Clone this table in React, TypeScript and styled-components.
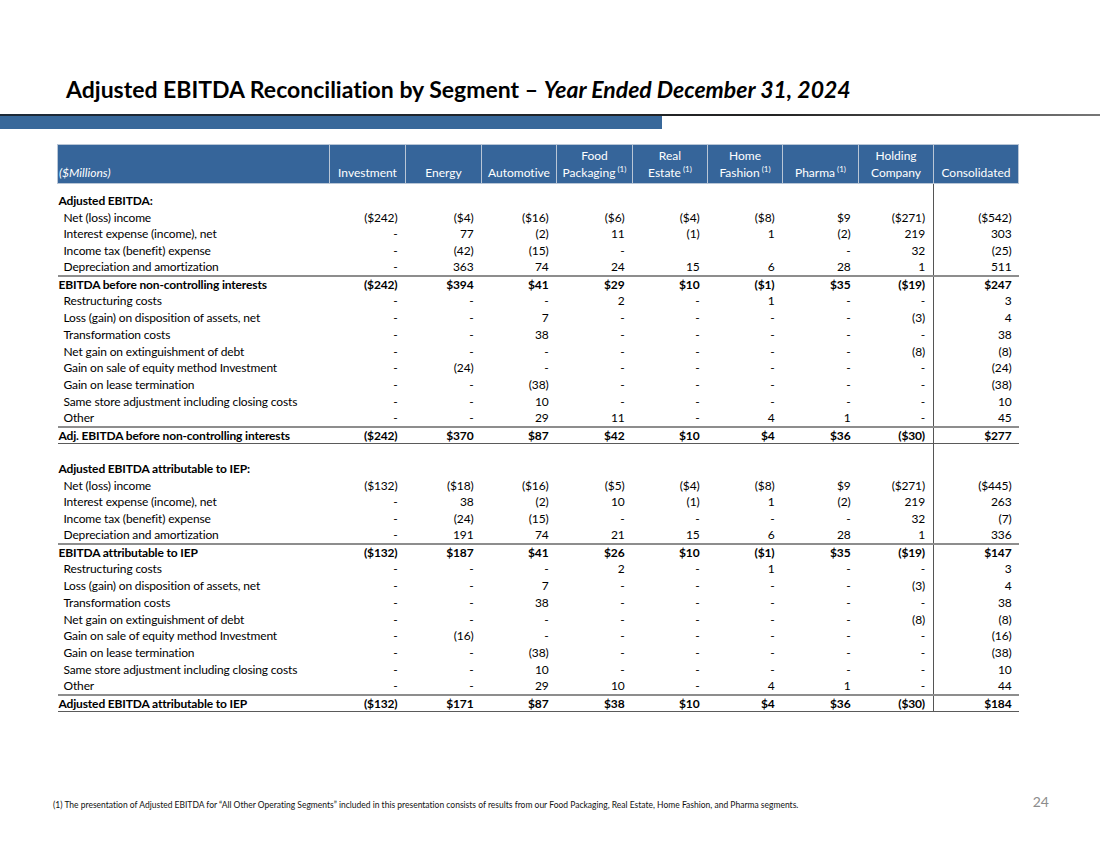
import styled, { createGlobalStyle } from 'styled-components';

const GlobalStyle = createGlobalStyle`
    html, body {
        margin: 0;
        padding: 0;
        background: #ffffff;
    }
    body {
        font-family: Lato, "Open Sans", "Liberation Sans", sans-serif;
        font-variant-ligatures: none;
        color: #000;
    }
`;

const Slide = styled.main`
    width: 1100px;
    height: 850px;
    box-sizing: border-box;
    background: #fff;
    display: flex;
    flex-direction: column;
    overflow: hidden;
`;

const Title = styled.h1`
    margin: 75px 0 0 66px;
    font-size: 23px;
    line-height: 29px;
    font-weight: 700;
    color: #000;

    em {
        font-style: italic;
    }
`;

const RuleBand = styled.div`
    margin-top: 10px;
    height: 1.5px;
    background: linear-gradient(to right, #1d2a38 0%, #222 70%, #777 100%);
`;

const BlueBar = styled.div`
    width: 662px;
    height: 13px;
    background: #38689a;
`;

const TableWrap = styled.div`
    margin: 15px 0 0 57px;
`;

const Table = styled.table`
    border-collapse: collapse;
    table-layout: fixed;
    width: 961px;
    font-size: 12px;
    letter-spacing: -0.15px;
`;

const HeadCell = styled.th<{ $left?: boolean }>`
    background: #36659a;
    color: #fff;
    font-weight: 400;
    font-style: ${({ $left }) => ($left ? 'italic' : 'normal')};
    text-align: ${({ $left }) => ($left ? 'left' : 'center')};
    vertical-align: bottom;
    padding: 0 2px 2px ${({ $left }) => ($left ? '1px' : '2px')};
    height: 36px;
    line-height: 17px;
    border: 1px solid #b9c6d6;
    white-space: nowrap;
    letter-spacing: 0;

    sup {
        font-size: 8px;
        vertical-align: 5px;
        line-height: 0;
    }
`;

const Spacer = styled.tr`
    height: 9px;
`;

const Row = styled.tr<{ $total?: boolean; $final?: boolean }>`
    height: 16.75px;
    font-weight: ${({ $total }) => ($total ? 700 : 400)};

    td {
        border-top: ${({ $total }) => ($total ? '2px solid #8d8d8d' : 'none')};
        border-bottom: ${({ $final }) => ($final ? '1px solid #5a5a5a' : 'none')};
    }
`;

const Label = styled.td<{ $indent?: boolean; $bold?: boolean }>`
    padding: 0 0 0 ${({ $indent }) => ($indent ? '6px' : '1px')};
    white-space: nowrap;
    line-height: 15px;
    font-weight: ${({ $bold }) => ($bold ? 700 : 'inherit')};
`;

const Num = styled.td<{ $divider?: boolean }>`
    text-align: right;
    padding: 0 ${({ $divider }) => ($divider ? '7px' : '8px')} 0 0;
    white-space: nowrap;
    line-height: 15px;
    border-left: ${({ $divider }) => ($divider ? '1px solid #555' : 'none')};
`;

const Footer = styled.footer`
    margin-top: auto;
    margin-bottom: 40px;
    display: flex;
    align-items: flex-end;
    justify-content: space-between;
    padding: 0 51px 0 53px;
`;

const Footnote = styled.p`
    margin: 0;
    font-size: 8.5px;
    line-height: 10px;
    color: #111;
`;

const PageNo = styled.span`
    font-size: 14px;
    color: #8c8c8c;
    line-height: 16px;
`;

type Line = {
    label: string;
    values?: string[];
    kind?: 'section' | 'item' | 'total' | 'final' | 'blank';
};

const columns = [
    { top: '', bottom: 'Investment', note: false },
    { top: '', bottom: 'Energy', note: false },
    { top: '', bottom: 'Automotive', note: false },
    { top: 'Food', bottom: 'Packaging', note: true },
    { top: 'Real', bottom: 'Estate', note: true },
    { top: 'Home', bottom: 'Fashion', note: true },
    { top: '', bottom: 'Pharma', note: true },
    { top: 'Holding', bottom: 'Company', note: false },
    { top: '', bottom: 'Consolidated', note: false },
];

const widths = [272, 76, 76, 75, 76, 75, 75, 76, 75, 85];

const split = (s: string) => s.split(' ').map((v) => (v === '_' ? '' : v));

const lines: Line[] = [
    { label: 'Adjusted EBITDA:', kind: 'section' },
    { label: 'Net (loss) income', values: split('($242) ($4) ($16) ($6) ($4) ($8) $9 ($271) ($542)') },
    { label: 'Interest expense (income), net', values: split('- 77 (2) 11 (1) 1 (2) 219 303') },
    { label: 'Income tax (benefit) expense', values: split('- (42) (15) - _ _ - 32 (25)') },
    { label: 'Depreciation and amortization', values: split('- 363 74 24 15 6 28 1 511') },
    { label: 'EBITDA before non-controlling interests', kind: 'total', values: split('($242) $394 $41 $29 $10 ($1) $35 ($19) $247') },
    { label: 'Restructuring costs', values: split('- - - 2 - 1 - - 3') },
    { label: 'Loss (gain) on disposition of assets, net', values: split('- - 7 - - - - (3) 4') },
    { label: 'Transformation costs', values: split('- - 38 - - - - - 38') },
    { label: 'Net gain on extinguishment of debt', values: split('- - - - - - - (8) (8)') },
    { label: 'Gain on sale of equity method Investment', values: split('- (24) - - - - - - (24)') },
    { label: 'Gain on lease termination', values: split('- - (38) - - - - - (38)') },
    { label: 'Same store adjustment including closing costs', values: split('- - 10 - - - - - 10') },
    { label: 'Other', values: split('- - 29 11 - 4 1 - 45') },
    { label: 'Adj. EBITDA before non-controlling interests', kind: 'final', values: split('($242) $370 $87 $42 $10 $4 $36 ($30) $277') },
    { label: '', kind: 'blank' },
    { label: 'Adjusted EBITDA attributable to IEP:', kind: 'section' },
    { label: 'Net (loss) income', values: split('($132) ($18) ($16) ($5) ($4) ($8) $9 ($271) ($445)') },
    { label: 'Interest expense (income), net', values: split('- 38 (2) 10 (1) 1 (2) 219 263') },
    { label: 'Income tax (benefit) expense', values: split('- (24) (15) - - - - 32 (7)') },
    { label: 'Depreciation and amortization', values: split('- 191 74 21 15 6 28 1 336') },
    { label: 'EBITDA attributable to IEP', kind: 'total', values: split('($132) $187 $41 $26 $10 ($1) $35 ($19) $147') },
    { label: 'Restructuring costs', values: split('- - - 2 - 1 - - 3') },
    { label: 'Loss (gain) on disposition of assets, net', values: split('- - 7 - - - - (3) 4') },
    { label: 'Transformation costs', values: split('- - 38 - - - - - 38') },
    { label: 'Net gain on extinguishment of debt', values: split('- - - - - - - (8) (8)') },
    { label: 'Gain on sale of equity method Investment', values: split('- (16) - - - - - - (16)') },
    { label: 'Gain on lease termination', values: split('- - (38) - - - - - (38)') },
    { label: 'Same store adjustment including closing costs', values: split('- - 10 - - - - - 10') },
    { label: 'Other', values: split('- - 29 10 - 4 1 - 44') },
    { label: 'Adjusted EBITDA attributable to IEP', kind: 'final', values: split('($132) $171 $87 $38 $10 $4 $36 ($30) $184') },
];

export default function App() {
    return (
        <Slide>
            <GlobalStyle />
            <Title>
                Adjusted EBITDA Reconciliation by Segment – <em>Year Ended December 31, 2024</em>
            </Title>
            <RuleBand />
            <BlueBar />

            <TableWrap>
                <Table>
                    <colgroup>
                        {widths.map((w, i) => (
                            <col key={i} style={{ width: w }} />
                        ))}
                    </colgroup>
                    <thead>
                        <tr>
                            <HeadCell $left>($Millions)</HeadCell>
                            {columns.map((c) => (
                                <HeadCell key={c.bottom}>
                                    {c.top && (
                                        <>
                                            {c.top}
                                            <br />
                                        </>
                                    )}
                                    {c.bottom}
                                    {c.note && <sup> (1)</sup>}
                                </HeadCell>
                            ))}
                        </tr>
                    </thead>
                    <tbody>
                        <Spacer>
                            <td colSpan={9} />
                            <Num $divider />
                        </Spacer>
                        {lines.map((line, i) => {
                            const isTotal = line.kind === 'total' || line.kind === 'final';
                            const bold = isTotal || line.kind === 'section';
                            const vals = line.values ?? Array(9).fill('');
                            return (
                                <Row key={i} $total={isTotal} $final={line.kind === 'final'}>
                                    <Label $indent={!bold && line.kind !== 'blank'} $bold={bold}>
                                        {line.label}
                                    </Label>
                                    {vals.map((v, j) => (
                                        <Num key={j} $divider={j === 8}>
                                            {v}
                                        </Num>
                                    ))}
                                </Row>
                            );
                        })}
                    </tbody>
                </Table>
            </TableWrap>

            <Footer>
                <Footnote>
                    (1) The presentation of Adjusted EBITDA for “All Other Operating Segments” included in this presentation consists of results from our Food Packaging, Real Estate, Home Fashion, and Pharma segments.
                </Footnote>
                <PageNo>24</PageNo>
            </Footer>
        </Slide>
    );
}
